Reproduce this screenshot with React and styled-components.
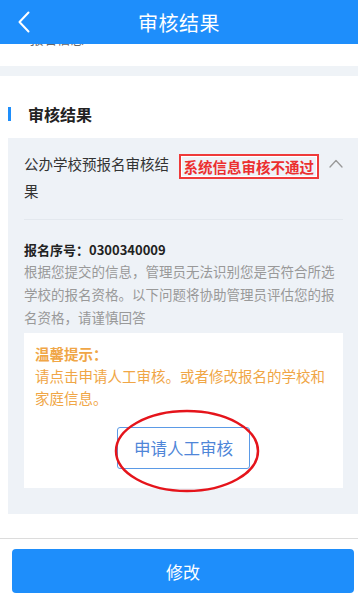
import styled, { createGlobalStyle } from "styled-components";

const GlobalStyle = createGlobalStyle`
  html, body {
    margin: 0;
    padding: 0;
    background: #fff;
    overflow: hidden;
    font-family: "Noto Sans CJK SC", "Noto Sans", sans-serif;
  }
`;

const Page = styled.div`
  width: 358px;
  height: 593px;
  display: flex;
  flex-direction: column;
  background: #fff;
  overflow: hidden;
`;

const Header = styled.div`
  height: 44px;
  flex-shrink: 0;
  background: #1e8efb;
  display: flex;
  align-items: center;
  justify-content: center;
  position: relative;
  z-index: 1;
`;

const BackButton = styled.div`
  position: absolute;
  left: 14px;
  top: 10px;
  width: 20px;
  height: 24px;
  display: flex;
  align-items: center;
  justify-content: center;
`;

const Title = styled.h1`
  margin: 0;
  font-size: 20px;
  font-weight: 400;
  color: #fff;
  letter-spacing: 0.5px;
`;

const PrevBlock = styled.div`
  height: 22px;
  flex-shrink: 0;
  overflow: hidden;
  padding-left: 30px;
`;

const PrevText = styled.div`
  margin-top: -14px;
  line-height: 16px;
  font-size: 13.5px;
  color: #666;
`;

const Band = styled.div`
  height: 10px;
  flex-shrink: 0;
  background: #eff3f7;
`;

const SectionHead = styled.div`
  display: flex;
  align-items: center;
  padding: 27px 0 0 8px;
  margin-bottom: 13px;
  height: 22px;
`;

const SectionBar = styled.span`
  width: 3px;
  height: 14px;
  background: #1e8efb;
  margin-right: 17px;
`;

const SectionTitle = styled.h2`
  margin: 0;
  font-size: 16px;
  font-weight: 700;
  color: #222;
`;

const Card = styled.div`
  margin-left: 8px;
  width: 350px;
  background: #eef2f7;
  padding: 12px 15px 26px 16px;
  box-sizing: border-box;
`;

const ResultRow = styled.div`
  display: flex;
  align-items: flex-start;
  padding-bottom: 15px;
  border-bottom: 1px solid #e3e8ee;
`;

const ResultName = styled.div`
  width: 152px;
  font-size: 14.5px;
  line-height: 27px;
  color: #333;
`;

const Stamp = styled.div`
  margin-left: 4px;
  margin-top: 4px;
  height: 25px;
  box-sizing: border-box;
  padding: 0 3px;
  border: 2px solid #ef3a3a;
  box-shadow: inset 0 0 0 1px #fff;
  display: flex;
  align-items: center;
  font-size: 14.5px;
  font-weight: 700;
  color: #ec2f2f;
  white-space: nowrap;
`;

const Chevron = styled.div`
  margin-left: 10px;
  margin-top: 9px;
  width: 14px;
  height: 10px;
  display: flex;
`;

const Serial = styled.div`
  margin-top: 20px;
  font-size: 13px;
  line-height: 20px;
  font-weight: 700;
  color: #222;
`;

const Desc = styled.p`
  margin: 0;
  font-size: 13.5px;
  line-height: 23px;
  color: #999;
`;

const TipBox = styled.div`
  margin-top: 4px;
  background: #fff;
  padding: 10px 11px 19px;
  display: flex;
  flex-direction: column;
  align-items: center;
`;

const TipText = styled.div`
  align-self: stretch;
  font-size: 14.5px;
  line-height: 22px;
  color: #f0a646;
`;

const TipLabel = styled.div`
  font-weight: 700;
`;

const ApplyWrap = styled.div`
  position: relative;
  margin-top: 18px;
`;

const ApplyButton = styled.button`
  width: 133px;
  height: 42px;
  background: #fff;
  border: 1px solid #5b9ae6;
  border-radius: 3px;
  color: #4f86d8;
  font-family: inherit;
  font-size: 16.5px;
  cursor: pointer;
`;

const Circle = styled.svg`
  position: absolute;
  left: -3px;
  top: -18px;
  pointer-events: none;
`;

const Spacer = styled.div`
  flex: 1;
`;

const Footer = styled.div`
  border-top: 1px solid #dcdcdc;
  padding: 10px 0 0 12px;
  flex-shrink: 0;
`;

const SubmitButton = styled.button`
  width: 342px;
  height: 44px;
  border: none;
  border-radius: 4px;
  background: #1e8efb;
  color: #fff;
  font-family: inherit;
  font-size: 17px;
  cursor: pointer;
`;

export default function App() {
  return (
    <Page>
      <GlobalStyle />
      <Header>
        <BackButton>
          <svg width="12" height="22" viewBox="0 0 12 22" fill="none">
            <path d="M10.5 1.5L1.5 11l9 9.5" stroke="#fff" strokeWidth="2" strokeLinecap="round" strokeLinejoin="round" />
          </svg>
        </BackButton>
        <Title>审核结果</Title>
      </Header>
      <PrevBlock>
        <PrevText>报名信息</PrevText>
      </PrevBlock>
      <Band />
      <SectionHead>
        <SectionBar />
        <SectionTitle>审核结果</SectionTitle>
      </SectionHead>
      <Card>
        <ResultRow>
          <ResultName>公办学校预报名审核结果</ResultName>
          <Stamp>系统信息审核不通过</Stamp>
          <Chevron>
            <svg width="14" height="9" viewBox="0 0 14 9" fill="none">
              <path d="M1 8l6-6.5L13 8" stroke="#999" strokeWidth="1.3" strokeLinecap="round" strokeLinejoin="round" />
            </svg>
          </Chevron>
        </ResultRow>
        <Serial>报名序号：0300340009</Serial>
        <Desc>
          根据您提交的信息，管理员无法识别您是否符合所选学校的报名资格。以下问题将协助管理员评估您的报名资格，请谨慎回答
        </Desc>
        <TipBox>
          <TipText>
            <TipLabel>温馨提示：</TipLabel>
            请点击申请人工审核。或者修改报名的学校和家庭信息。
          </TipText>
          <ApplyWrap>
            <ApplyButton>申请人工审核</ApplyButton>
            <Circle width="146" height="84" viewBox="0 0 146 84">
              <ellipse cx="73" cy="42" rx="71" ry="40" fill="none" stroke="#e5141b" strokeWidth="2.5" />
            </Circle>
          </ApplyWrap>
        </TipBox>
      </Card>
      <Spacer />
      <Footer>
        <SubmitButton>修改</SubmitButton>
      </Footer>
    </Page>
  );
}
